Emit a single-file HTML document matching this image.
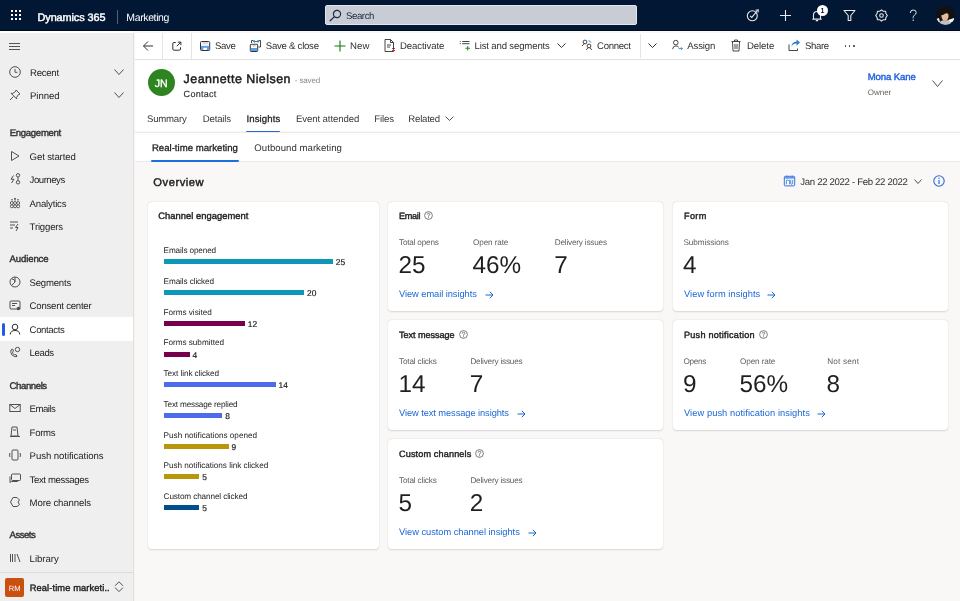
<!DOCTYPE html>
<html><head><meta charset="utf-8"><style>
html,body{margin:0;padding:0;width:960px;height:601px;overflow:hidden;background:#f9f8f7;font-family:"Liberation Sans", sans-serif}
.t{position:absolute;line-height:1;white-space:nowrap;font-family:"Liberation Sans", sans-serif;text-rendering:geometricPrecision}
svg{overflow:visible}
</style></head><body>
<div style="position:absolute;left:0;top:0;width:960px;height:601px;will-change:transform">
<div style="position:absolute;left:0px;top:0px;width:960px;height:31px;background:#011733"></div>
<div style="position:absolute;left:0px;top:30px;width:960px;height:1px;background:#000b1f"></div>
<div style="position:absolute;left:11px;top:10px;width:2px;height:2px;background:#fff"></div>
<div style="position:absolute;left:11px;top:14px;width:2px;height:2px;background:#fff"></div>
<div style="position:absolute;left:11px;top:18px;width:2px;height:2px;background:#fff"></div>
<div style="position:absolute;left:15px;top:10px;width:2px;height:2px;background:#fff"></div>
<div style="position:absolute;left:15px;top:14px;width:2px;height:2px;background:#fff"></div>
<div style="position:absolute;left:15px;top:18px;width:2px;height:2px;background:#fff"></div>
<div style="position:absolute;left:19px;top:10px;width:2px;height:2px;background:#fff"></div>
<div style="position:absolute;left:19px;top:14px;width:2px;height:2px;background:#fff"></div>
<div style="position:absolute;left:19px;top:18px;width:2px;height:2px;background:#fff"></div>
<div class="t" style="left:37.50px;top:13.00px;font-size:10.9px;color:#fff;font-weight:400;letter-spacing:-0.091px;-webkit-text-stroke:0.45px #fff">Dynamics 365</div>
<div style="position:absolute;left:117px;top:10px;width:1px;height:14px;background:#56617a"></div>
<div class="t" style="left:126.30px;top:13.00px;font-size:10.5px;color:#fff;font-weight:400;letter-spacing:-0.375px;">Marketing</div>
<div style="position:absolute;left:325px;top:5px;width:312px;height:20px;background:#c8ccd4;border-radius:2px;box-sizing:border-box;border:1px solid #e4e6ea"></div>
<svg style="position:absolute;left:329px;top:9px;" width="13" height="13" viewBox="0 0 13 13" fill="none"><circle cx="8" cy="5" r="3.6" stroke="#1f2a44" stroke-width="1.2"/><path d="M5.4 7.6 L1.2 11.8" stroke="#1f2a44" stroke-width="1.3" stroke-linecap="round"/></svg>
<div class="t" style="left:346.00px;top:12.00px;font-size:9.6px;color:#1b2741;font-weight:400;letter-spacing:-0.400px;">Search</div>
<svg style="position:absolute;left:746px;top:9px;" width="14" height="13" viewBox="0 0 14 13" fill="none"><circle cx="6.3" cy="6.8" r="5" stroke="#e8eaee" stroke-width="1.1"/><path d="M4 6.8 L5.8 8.4 L11.5 1.5" stroke="#e8eaee" stroke-width="1.1"/><path d="M9.5 1.3 L12.3 0.8 L12 3.5" stroke="#e8eaee" stroke-width="1.1"/></svg>
<svg style="position:absolute;left:779px;top:9px;" width="13" height="13" viewBox="0 0 13 13" fill="none"><path d="M6.5 1 V12 M1 6.5 H12" stroke="#e8eaee" stroke-width="1.1"/></svg>
<svg style="position:absolute;left:811px;top:9px;" width="12" height="13" viewBox="0 0 12 13" fill="none"><path d="M2.5 10 V6 A3.5 3.5 0 0 1 9.5 6 V10 Z M1.2 10.2 H10.8 M4.8 11.6 H7.2" stroke="#e8eaee" stroke-width="1.1"/></svg>
<div style="position:absolute;left:817px;top:4.5px;width:11px;height:11px;border-radius:50%;background:#fff;color:#011733;font:bold 7px/11px 'Liberation Sans',sans-serif;text-align:center">1</div>
<svg style="position:absolute;left:843px;top:9px;" width="13" height="13" viewBox="0 0 13 13" fill="none"><path d="M1 1.5 H12 L7.8 6.5 V11.5 H5.2 V6.5 Z" stroke="#e8eaee" stroke-width="1.1" stroke-linejoin="round"/></svg>
<svg style="position:absolute;left:875px;top:9px;" width="13" height="13" viewBox="0 0 13 13" fill="none"><path d="M6.5 0.8 L8.3 2.3 L10.6 2.2 L10.9 4.5 L12.3 6.5 L10.9 8.5 L10.6 10.8 L8.3 10.7 L6.5 12.2 L4.7 10.7 L2.4 10.8 L2.1 8.5 L0.7 6.5 L2.1 4.5 L2.4 2.2 L4.7 2.3 Z" stroke="#e8eaee" stroke-width="1.1" stroke-linejoin="round"/><circle cx="6.5" cy="6.5" r="1.8" stroke="#e8eaee" stroke-width="1.1"/></svg>
<svg style="position:absolute;left:908px;top:9px;" width="10" height="13" viewBox="0 0 10 13" fill="none"><path d="M2.3 3.6 Q2.3 1 5.2 1 Q8.2 1 8.2 3.5 Q8.2 5.2 6.3 6.3 Q5.2 7 5.2 8.6 V9" stroke="#e8eaee" stroke-width="1" stroke-linecap="round"/><circle cx="5.2" cy="11.3" r="0.7" fill="#e8eaee"/></svg>
<svg style="position:absolute;left:936px;top:6px;" width="19" height="19" viewBox="0 0 19 19" fill="none"><defs><clipPath id="av"><circle cx="9.5" cy="9.5" r="9.5"/></clipPath></defs><g clip-path="url(#av)"><rect width="19" height="19" fill="#141010"/><path d="M3 19 Q3 14 9.5 14 Q16 14 16 19Z" fill="#b9c1cc"/><path d="M12 14 L18 12 L19 16 L14 16Z" fill="#f2f2f2"/><path d="M0 13 L3 12 L4 16 L0 17Z" fill="#e8e8e8"/><ellipse cx="9" cy="10" rx="3.6" ry="4.6" fill="#e6bb9c"/><path d="M5 9 Q6 3 11 4 Q13 5 13 8 Q10 6 7 9 Z" fill="#141010"/><rect x="8.2" y="13.5" width="2.2" height="2" fill="#d9a888"/></g></svg>
<div style="position:absolute;left:0px;top:31px;width:133px;height:2px;background:#ffffff"></div>
<div style="position:absolute;left:0px;top:33px;width:133px;height:568px;background:#efefef"></div>
<div style="position:absolute;left:133px;top:33px;width:1px;height:568px;background:#e0e0e0"></div>
<div style="position:absolute;left:134px;top:33px;width:1px;height:568px;background:#f4f4f4"></div>
<div style="position:absolute;left:9px;top:43px;width:11px;height:1px;background:#555"></div>
<div style="position:absolute;left:9px;top:46px;width:11px;height:1px;background:#555"></div>
<div style="position:absolute;left:9px;top:49px;width:11px;height:1px;background:#555"></div>
<div class="t" style="left:30.00px;top:69.00px;font-size:9.6px;color:#252423;font-weight:400;letter-spacing:-0.260px;">Recent</div>
<svg style="position:absolute;left:9px;top:66px;" width="12" height="12" viewBox="0 0 12 12" fill="none"><circle cx="6" cy="6" r="5.3" stroke="#505050" stroke-width="1"/><path d="M6 3 V6.3 H8.4" stroke="#505050" stroke-width="1"/></svg>
<svg style="position:absolute;left:114px;top:69px;" width="10" height="6" viewBox="0 0 10 6" fill="none"><path d="M0.5 0.5 L5.0 5.5 L9.5 0.5" stroke="#505050" stroke-width="1"/></svg>
<div class="t" style="left:30.00px;top:92.00px;font-size:9.6px;color:#252423;font-weight:400;letter-spacing:-0.060px;">Pinned</div>
<svg style="position:absolute;left:9px;top:89px;" width="12" height="12" viewBox="0 0 12 12" fill="none"><path d="M7 1 L11 5 L9.5 5.5 L7.5 8.5 L7.8 10 L2 4.2 L3.5 4.5 L6.5 2.5 Z M4.5 7.5 L1 11" stroke="#505050" stroke-width="1" stroke-linejoin="round"/></svg>
<svg style="position:absolute;left:114px;top:92px;" width="10" height="6" viewBox="0 0 10 6" fill="none"><path d="M0.5 0.5 L5.0 5.5 L9.5 0.5" stroke="#505050" stroke-width="1"/></svg>
<div class="t" style="left:9.80px;top:129.00px;font-size:9.6px;color:#323130;font-weight:400;letter-spacing:-0.333px;-webkit-text-stroke:0.4px #323130">Engagement</div>
<div class="t" style="left:9.60px;top:255.00px;font-size:9.6px;color:#323130;font-weight:400;letter-spacing:-0.143px;-webkit-text-stroke:0.4px #323130">Audience</div>
<div class="t" style="left:9.60px;top:382.00px;font-size:9.6px;color:#323130;font-weight:400;letter-spacing:-0.429px;-webkit-text-stroke:0.4px #323130">Channels</div>
<div class="t" style="left:9.60px;top:531.00px;font-size:9.6px;color:#323130;font-weight:400;letter-spacing:-0.520px;-webkit-text-stroke:0.4px #323130">Assets</div>
<div style="position:absolute;left:0px;top:317px;width:133px;height:24px;background:#fff"></div>
<div style="position:absolute;left:2px;top:323px;width:3px;height:13px;background:#1f5ce6;border-radius:2px"></div>
<div class="t" style="left:29.60px;top:153.00px;font-size:9.6px;color:#252423;font-weight:400;letter-spacing:-0.130px;">Get started</div>
<svg style="position:absolute;left:9px;top:150px;" width="12" height="12" viewBox="0 0 12 12" fill="none"><path d="M2.5 1.5 L10 6 L2.5 10.5 Z" stroke="#505050" stroke-width="1" stroke-linejoin="round"/></svg>
<div class="t" style="left:29.60px;top:176.00px;font-size:9.6px;color:#252423;font-weight:400;letter-spacing:-0.471px;">Journeys</div>
<svg style="position:absolute;left:9px;top:173.3px;" width="12" height="12" viewBox="0 0 12 12" fill="none"><circle cx="9" cy="2.3" r="1.7" stroke="#505050"/><circle cx="9" cy="9.3" r="1.7" stroke="#505050"/><path d="M9 4 V7.6 M4.5 2.5 L2 6.2 H5 L2.5 10" stroke="#505050" stroke-linejoin="round"/></svg>
<div class="t" style="left:29.60px;top:200.00px;font-size:9.6px;color:#252423;font-weight:400;letter-spacing:-0.188px;">Analytics</div>
<svg style="position:absolute;left:9px;top:196.7px;" width="12" height="12" viewBox="0 0 12 12" fill="none"><circle cx="2.8" cy="9.3" r="1.5" stroke="#505050" stroke-width="0.9"/><circle cx="6" cy="9.3" r="1.5" stroke="#505050" stroke-width="0.9"/><circle cx="9.2" cy="9.3" r="1.5" stroke="#505050" stroke-width="0.9"/><circle cx="2.8" cy="6" r="1.5" stroke="#505050" stroke-width="0.9"/><circle cx="6" cy="6" r="1.5" stroke="#505050" stroke-width="0.9"/><circle cx="9.2" cy="6" r="1.5" stroke="#505050" stroke-width="0.9"/><path d="M2 2.8 H4 M5 2.8 H7 M5 1.5 H7 M8 2.8 H10" stroke="#505050" stroke-width="0.9"/></svg>
<div class="t" style="left:29.60px;top:223.00px;font-size:9.6px;color:#252423;font-weight:400;letter-spacing:-0.186px;">Triggers</div>
<svg style="position:absolute;left:9px;top:220px;" width="12" height="12" viewBox="0 0 12 12" fill="none"><path d="M1 2 H9 M1 5 H6 M1 8 H4 M9 4 L6.5 7.5 H9 L7 11" stroke="#505050" stroke-linejoin="round"/></svg>
<div class="t" style="left:29.60px;top:279.00px;font-size:9.6px;color:#252423;font-weight:400;letter-spacing:-0.229px;">Segments</div>
<svg style="position:absolute;left:9px;top:276px;" width="12" height="12" viewBox="0 0 12 12" fill="none"><circle cx="6" cy="6" r="5" stroke="#505050"/><path d="M6 1 V6 L2.5 9.5 M6 6 A3 3 0 0 0 3 3" stroke="#505050"/></svg>
<div class="t" style="left:29.60px;top:302.00px;font-size:9.6px;color:#252423;font-weight:400;letter-spacing:-0.231px;">Consent center</div>
<svg style="position:absolute;left:9px;top:299.4px;" width="12" height="12" viewBox="0 0 12 12" fill="none"><rect x="1" y="2" width="10" height="8" rx="1" stroke="#505050"/><path d="M3 4.5 H8 M3 6.5 H6" stroke="#505050"/><circle cx="9.5" cy="9.5" r="1.8" fill="#505050"/></svg>
<div class="t" style="left:29.60px;top:326.00px;font-size:9.6px;color:#252423;font-weight:400;letter-spacing:-0.371px;">Contacts</div>
<svg style="position:absolute;left:9px;top:322.6px;" width="12" height="12" viewBox="0 0 12 12" fill="none"><circle cx="6" cy="4" r="2.8" stroke="#303030"/><path d="M1.2 11.5 Q1.5 7.5 6 7.5 Q10.5 7.5 10.8 11.5" stroke="#303030"/></svg>
<div class="t" style="left:29.60px;top:349.00px;font-size:9.6px;color:#252423;font-weight:400;letter-spacing:-0.400px;">Leads</div>
<svg style="position:absolute;left:9px;top:346px;" width="12" height="12" viewBox="0 0 12 12" fill="none"><circle cx="8.5" cy="3.5" r="2.2" stroke="#505050"/><path d="M2 4 Q1 6 3 9 Q6 11.5 8 10.5 L7 8.5 L5.5 9 Q3.5 7.5 3.5 6 L4.5 5 L3.5 3 Z" stroke="#505050" stroke-linejoin="round"/></svg>
<div class="t" style="left:29.60px;top:405.00px;font-size:9.6px;color:#252423;font-weight:400;letter-spacing:-0.520px;">Emails</div>
<svg style="position:absolute;left:9px;top:402.4px;" width="12" height="12" viewBox="0 0 12 12" fill="none"><rect x="0.8" y="2.5" width="10.4" height="7" stroke="#505050"/><path d="M0.8 2.5 L6 6.5 L11.2 2.5" stroke="#505050"/></svg>
<div class="t" style="left:29.60px;top:429.00px;font-size:9.6px;color:#252423;font-weight:400;letter-spacing:-0.300px;">Forms</div>
<svg style="position:absolute;left:9px;top:425.8px;" width="12" height="12" viewBox="0 0 12 12" fill="none"><path d="M3 1 H8 L9 10 H2 Z M1 10.5 H11" stroke="#505050" stroke-linejoin="round"/><path d="M4 4 H7" stroke="#505050"/></svg>
<div class="t" style="left:29.60px;top:452.00px;font-size:9.6px;color:#252423;font-weight:400;letter-spacing:-0.071px;">Push notifications</div>
<svg style="position:absolute;left:9px;top:449.4px;" width="12" height="12" viewBox="0 0 12 12" fill="none"><rect x="3" y="1" width="6" height="10" rx="1" stroke="#505050"/><path d="M1 4 Q0 6 1 8 M11 4 Q12 6 11 8" stroke="#505050"/></svg>
<div class="t" style="left:29.60px;top:476.00px;font-size:9.6px;color:#252423;font-weight:400;letter-spacing:-0.383px;">Text messages</div>
<svg style="position:absolute;left:9px;top:472.6px;" width="12" height="12" viewBox="0 0 12 12" fill="none"><rect x="2.5" y="1" width="9" height="6.5" rx="1" stroke="#505050"/><path d="M1 3.5 V9.5 L2.5 8.5 H8.5 V7.5" stroke="#505050" stroke-linejoin="round"/></svg>
<div class="t" style="left:29.60px;top:499.00px;font-size:9.6px;color:#252423;font-weight:400;letter-spacing:-0.133px;">More channels</div>
<svg style="position:absolute;left:9px;top:496px;" width="12" height="12" viewBox="0 0 12 12" fill="none"><path d="M4 1.5 L8 1.5 L10.5 4 L9 6 L10.5 8.5 L8 10.5 L4 10.5 L1.5 6 Z" stroke="#505050" stroke-linejoin="round"/></svg>
<div class="t" style="left:29.60px;top:555.00px;font-size:9.6px;color:#252423;font-weight:400;letter-spacing:-0.033px;">Library</div>
<svg style="position:absolute;left:9px;top:552px;" width="12" height="12" viewBox="0 0 12 12" fill="none"><path d="M1.5 2 V10 M3.5 2 V10 M6 2 V10 M8 2 L11 10" stroke="#505050"/></svg>
<div style="position:absolute;left:0px;top:572px;width:133px;height:1px;background:#dcdcdc"></div>
<div style="position:absolute;left:5px;top:578px;width:19px;height:19px;background:#ca5010;border-radius:2px"></div>
<div class="t" style="left:8.80px;top:585.00px;font-size:7.6px;color:#fff;font-weight:400;">RM</div>
<div class="t" style="left:29.70px;top:584.00px;font-size:9.3px;color:#201f1e;font-weight:400;letter-spacing:0.111px;-webkit-text-stroke:0.4px #201f1e">Real-time marketi..</div>
<svg style="position:absolute;left:114px;top:581px;" width="10" height="12" viewBox="0 0 10 12" fill="none"><path d="M1 4.8 L5 0.8 L9 4.8 M1 6.6 L5 10.6 L9 6.6" stroke="#505050" stroke-width="1"/></svg>
<div style="position:absolute;left:135px;top:33px;width:825px;height:26px;background:#fff"></div>
<div style="position:absolute;left:135px;top:59px;width:825px;height:1px;background:#e3e1df"></div>
<svg style="position:absolute;left:142px;top:40px;" width="12" height="12" viewBox="0 0 12 12" fill="none"><path d="M11 6 H1.5 M6 1.5 L1.5 6 L6 10.5" stroke="#323130" stroke-width="1"/></svg>
<div style="position:absolute;left:162px;top:33px;width:1px;height:26px;background:#e6e4e2"></div>
<svg style="position:absolute;left:172px;top:41px;" width="10" height="10" viewBox="0 0 10 10" fill="none"><path d="M3.8 1.5 H2 Q0.8 1.5 0.8 2.7 V8 Q0.8 9.2 2 9.2 H7.3 Q8.5 9.2 8.5 8 V6.3" stroke="#323130" stroke-width="1"/><path d="M4.8 5.2 L8.8 1.2 M5.8 1.1 H8.9 V4.2" stroke="#323130" stroke-width="1"/></svg>
<div style="position:absolute;left:191px;top:33px;width:1px;height:26px;background:#e6e4e2"></div>
<svg style="position:absolute;left:200px;top:40.5px;" width="10" height="10" viewBox="0 0 10 10" fill="none"><rect x="0.5" y="0.5" width="9.2" height="9" rx="1" fill="#fff" stroke="#323130" stroke-width="1"/><rect x="1" y="4.8" width="8.2" height="4.2" fill="#5ca0e8"/><rect x="2.3" y="1" width="5.6" height="2.3" fill="#d8d8d8"/><rect x="3.3" y="6.8" width="3.6" height="2.2" fill="#fff"/></svg>
<div class="t" style="left:215.00px;top:42.00px;font-size:9.6px;color:#323130;font-weight:400;letter-spacing:-0.333px;">Save</div>
<svg style="position:absolute;left:249px;top:39px;" width="13" height="13" viewBox="0 0 13 13" fill="none"><rect x="1.3" y="5.3" width="7.4" height="7.2" rx="0.8" fill="#fff" stroke="#323130" stroke-width="1"/><rect x="1.8" y="9" width="6.4" height="3" fill="#5ca0e8"/><rect x="3.3" y="5.8" width="3.4" height="1.8" fill="#d0d0d0"/><path d="M2.5 4 V1.5 H4.5 M9.5 1.5 H11.5 V8 H9.5" stroke="#323130" stroke-width="0.9"/><path d="M4.5 2.5 H9.8 M8.6 1.3 L9.8 2.5 L8.6 3.7 M5.7 1.3 L4.5 2.5 L5.7 3.7" stroke="#1b6ad0" stroke-width="0.9"/></svg>
<div class="t" style="left:265.75px;top:42.00px;font-size:9.6px;color:#323130;font-weight:400;letter-spacing:-0.250px;">Save &amp; close</div>
<svg style="position:absolute;left:334px;top:40px;" width="12" height="12" viewBox="0 0 12 12" fill="none"><path d="M6 0.5 V11.5 M0.5 6 H11.5" stroke="#107c10" stroke-width="1.1"/></svg>
<div class="t" style="left:350.00px;top:42.00px;font-size:9.6px;color:#323130;font-weight:400;letter-spacing:0.125px;">New</div>
<svg style="position:absolute;left:384px;top:39px;" width="12" height="13" viewBox="0 0 12 13" fill="none"><path d="M1 0.5 H6.5 L9.5 3.5 V12.5 H1 Z M6.5 0.5 V3.5 H9.5 M3 6 H7 M3 8 H6" stroke="#323130" stroke-width="0.9" stroke-linejoin="round"/><path d="M8 9 L11 12 M11 9 L8 12" stroke="#d13438" stroke-width="1"/></svg>
<div class="t" style="left:400.00px;top:42.00px;font-size:9.6px;color:#323130;font-weight:400;letter-spacing:-0.111px;">Deactivate</div>
<svg style="position:absolute;left:459px;top:39px;" width="12" height="12" viewBox="0 0 12 12" fill="none"><circle cx="1.3" cy="2.5" r="0.6" fill="#505050"/><circle cx="1.3" cy="4.7" r="0.6" fill="#505050"/><path d="M3.2 2.5 H10.5 M3.2 4.7 H10.5" stroke="#323130" stroke-width="0.9"/><path d="M8.7 7 V11.6 M6.4 9.3 H11" stroke="#2e8b2e" stroke-width="1.1"/></svg>
<div class="t" style="left:474.50px;top:42.00px;font-size:9.6px;color:#323130;font-weight:400;letter-spacing:-0.156px;">List and segments</div>
<svg style="position:absolute;left:557px;top:43px;" width="9" height="5" viewBox="0 0 9 5" fill="none"><path d="M0.5 0.5 L4.5 4.5 L8.5 0.5" stroke="#323130" stroke-width="1"/></svg>
<svg style="position:absolute;left:581px;top:39px;" width="13" height="13" viewBox="0 0 13 13" fill="none"><circle cx="4" cy="3" r="1.9" stroke="#323130" stroke-width="0.9"/><path d="M3 4.8 L1.2 6.8" stroke="#323130" stroke-width="0.9" stroke-linecap="round"/><circle cx="8" cy="7" r="1.9" stroke="#323130" stroke-width="0.9"/><path d="M7 8.8 L5.4 10.6 M9 8.8 L10.6 10.6" stroke="#323130" stroke-width="0.9" stroke-linecap="round"/><path d="M7.6 1.6 Q9.3 1.9 9.9 3.6" stroke="#2b88d8" stroke-width="1"/></svg>
<div class="t" style="left:597.00px;top:42.00px;font-size:9.6px;color:#323130;font-weight:400;letter-spacing:-0.292px;">Connect</div>
<div style="position:absolute;left:640px;top:34px;width:1px;height:24px;background:#e6e4e2"></div>
<svg style="position:absolute;left:648px;top:43px;" width="9" height="5" viewBox="0 0 9 5" fill="none"><path d="M0.5 0.5 L4.5 4.5 L8.5 0.5" stroke="#323130" stroke-width="1"/></svg>
<svg style="position:absolute;left:672px;top:39px;" width="12" height="13" viewBox="0 0 12 13" fill="none"><circle cx="3.8" cy="3.6" r="2.3" stroke="#323130" stroke-width="0.9"/><path d="M0.7 9.8 Q0.9 6.9 3.8 6.9 Q5.6 6.9 6.5 7.9" stroke="#323130" stroke-width="0.9" stroke-linecap="round"/><path d="M6.6 9.6 H10.4 M9 8.2 L10.4 9.6 L9 11" stroke="#2b88d8" stroke-width="0.9"/></svg>
<div class="t" style="left:687.30px;top:42.00px;font-size:9.6px;color:#323130;font-weight:400;letter-spacing:-0.160px;">Assign</div>
<svg style="position:absolute;left:731px;top:39px;" width="10" height="13" viewBox="0 0 10 13" fill="none"><path d="M0.5 2.5 H9.5 M3.5 2.5 V1 H6.5 V2.5 M1.5 2.5 L2 12 H8 L8.5 2.5 M4 5 V10 M6 5 V10" stroke="#323130" stroke-width="0.9"/></svg>
<div class="t" style="left:747.00px;top:42.00px;font-size:9.6px;color:#323130;font-weight:400;letter-spacing:-0.100px;">Delete</div>
<svg style="position:absolute;left:788px;top:39px;" width="13" height="13" viewBox="0 0 13 13" fill="none"><path d="M1 5.5 V11.5 H9.5 V9.5" stroke="#323130" stroke-width="0.9"/><path d="M3.2 9.2 Q3.6 4.8 8.6 4.6 V6.8 L12 3.6 L8.6 0.6 V2.6 Q3.4 3 3.2 9.2 Z" fill="#2b7cd3"/></svg>
<div class="t" style="left:805.00px;top:42.00px;font-size:9.6px;color:#323130;font-weight:400;letter-spacing:-0.375px;">Share</div>
<div style="position:absolute;left:844.5px;top:45px;width:1.8px;height:1.8px;background:#323130;border-radius:50%"></div>
<div style="position:absolute;left:848.7px;top:45px;width:1.8px;height:1.8px;background:#323130;border-radius:50%"></div>
<div style="position:absolute;left:852.9px;top:45px;width:1.8px;height:1.8px;background:#323130;border-radius:50%"></div>
<div style="position:absolute;left:135px;top:60px;width:825px;height:71px;background:#fff"></div>
<div style="position:absolute;left:147.5px;top:69px;width:27px;height:27px;border-radius:50%;background:#2e8420"></div>
<div class="t" style="left:154.80px;top:79.00px;font-size:10.6px;color:#fff;font-weight:400;-webkit-text-stroke:0.35px #fff">JN</div>
<div class="t" style="left:183.60px;top:73.00px;font-size:12.4px;color:#201f1e;font-weight:400;letter-spacing:0.475px;-webkit-text-stroke:0.5px #201f1e">Jeannette Nielsen</div>
<div class="t" style="left:294.80px;top:77.00px;font-size:8.0px;color:#8a8886;font-weight:400;letter-spacing:-0.15px">- saved</div>
<div class="t" style="left:183.60px;top:90.00px;font-size:9.0px;color:#323130;font-weight:400;letter-spacing:0.283px;-webkit-text-stroke:0.15px #323130">Contact</div>
<div class="t" style="left:867.70px;top:73.00px;font-size:9.6px;color:#1f63e0;font-weight:400;letter-spacing:-0.125px;-webkit-text-stroke:0.4px #1f63e0">Mona Kane</div>
<div class="t" style="left:867.70px;top:89.00px;font-size:8.0px;color:#605e5c;font-weight:400;letter-spacing:0.000px;">Owner</div>
<svg style="position:absolute;left:932px;top:80px;" width="11" height="7" viewBox="0 0 11 7" fill="none"><path d="M0.5 0.5 L5.5 6.5 L10.5 0.5" stroke="#505050" stroke-width="1"/></svg>
<div class="t" style="left:147.00px;top:115.00px;font-size:9.6px;color:#3b3a39;font-weight:400;letter-spacing:-0.217px;">Summary</div>
<div class="t" style="left:202.75px;top:115.00px;font-size:9.6px;color:#3b3a39;font-weight:400;letter-spacing:-0.167px;">Details</div>
<div class="t" style="left:246.50px;top:115.00px;font-size:9.6px;color:#201f1e;font-weight:400;letter-spacing:0.100px;-webkit-text-stroke:0.3px #201f1e">Insights</div>
<div class="t" style="left:296.00px;top:115.00px;font-size:9.6px;color:#3b3a39;font-weight:400;letter-spacing:-0.100px;">Event attended</div>
<div class="t" style="left:374.30px;top:115.00px;font-size:9.6px;color:#3b3a39;font-weight:400;letter-spacing:-0.150px;">Files</div>
<div class="t" style="left:408.30px;top:115.00px;font-size:9.6px;color:#3b3a39;font-weight:400;letter-spacing:-0.217px;">Related</div>
<svg style="position:absolute;left:445px;top:116px;" width="9" height="5" viewBox="0 0 9 5" fill="none"><path d="M0.5 0.5 L4.5 4.5 L8.5 0.5" stroke="#505050" stroke-width="1"/></svg>
<div style="position:absolute;left:246px;top:131px;width:34px;height:2px;background:#2367e0;border-radius:1px"></div>
<div style="position:absolute;left:135px;top:132px;width:825px;height:1px;background:#edebe9"></div>
<div style="position:absolute;left:135px;top:133px;width:825px;height:29px;background:#fff"></div>
<div class="t" style="left:151.90px;top:144.00px;font-size:9.6px;color:#201f1e;font-weight:400;letter-spacing:0.011px;-webkit-text-stroke:0.3px #201f1e">Real-time marketing</div>
<div class="t" style="left:254.30px;top:144.00px;font-size:9.6px;color:#323130;font-weight:400;letter-spacing:0.041px;">Outbound marketing</div>
<div style="position:absolute;left:135px;top:161px;width:825px;height:1px;background:#ebe9e7"></div>
<div style="position:absolute;left:151px;top:160px;width:88px;height:2px;background:#1c6fdc;border-radius:1px"></div>
<div style="position:absolute;left:135px;top:162px;width:825px;height:439px;background:#f9f8f7"></div>
<div class="t" style="left:153.30px;top:178.00px;font-size:11.2px;color:#201f1e;font-weight:400;letter-spacing:0.529px;-webkit-text-stroke:0.45px #201f1e">Overview</div>
<svg style="position:absolute;left:783px;top:175px;" width="13" height="12" viewBox="0 0 13 12" fill="none"><rect x="1.3" y="1.3" width="10.4" height="9.6" rx="1" stroke="#2f74e0" stroke-width="1"/><path d="M1.5 2.9 H11.5" stroke="#2f74e0" stroke-width="1.2"/><circle cx="3.8" cy="1.2" r="0.6" fill="#2f74e0"/><circle cx="9.2" cy="1.2" r="0.6" fill="#2f74e0"/><path d="M3.4 9.3 V5.9 Q3.4 4.9 4.5 4.9 Q5.5 4.9 5.5 5.9 M6.6 4.9 V9.3 M7.7 4.9 V8.2 Q7.7 9.3 8.7 9.3 Q9.7 9.3 9.7 8.2 V4.9" stroke="#2f74e0" stroke-width="0.8"/></svg>
<div class="t" style="left:800.30px;top:178.00px;font-size:9.6px;color:#323130;font-weight:400;letter-spacing:-0.321px;">Jan 22 2022 - Feb 22 2022</div>
<svg style="position:absolute;left:914px;top:179px;" width="8" height="5" viewBox="0 0 8 5" fill="none"><path d="M0.5 0.5 L4.0 4.5 L7.5 0.5" stroke="#505050" stroke-width="1"/></svg>
<svg style="position:absolute;left:933px;top:175px;" width="12" height="12" viewBox="0 0 12 12" fill="none"><circle cx="6" cy="6" r="5.2" stroke="#2b6fd6" stroke-width="1.1"/><path d="M6 5 V9" stroke="#2b6fd6" stroke-width="1.2"/><circle cx="6" cy="3.3" r="0.7" fill="#2b6fd6"/></svg>
<div style="position:absolute;left:148px;top:202px;width:231px;height:347px;background:#fff;border-radius:4px;box-shadow:0 0.8px 1.8px rgba(0,0,0,0.13),0 0 1px rgba(0,0,0,0.11)"></div>
<div style="position:absolute;left:388px;top:202px;width:275px;height:109px;background:#fff;border-radius:4px;box-shadow:0 0.8px 1.8px rgba(0,0,0,0.13),0 0 1px rgba(0,0,0,0.11)"></div>
<div style="position:absolute;left:673px;top:202px;width:275px;height:109px;background:#fff;border-radius:4px;box-shadow:0 0.8px 1.8px rgba(0,0,0,0.13),0 0 1px rgba(0,0,0,0.11)"></div>
<div style="position:absolute;left:388px;top:320px;width:275px;height:110px;background:#fff;border-radius:4px;box-shadow:0 0.8px 1.8px rgba(0,0,0,0.13),0 0 1px rgba(0,0,0,0.11)"></div>
<div style="position:absolute;left:673px;top:320px;width:275px;height:110px;background:#fff;border-radius:4px;box-shadow:0 0.8px 1.8px rgba(0,0,0,0.13),0 0 1px rgba(0,0,0,0.11)"></div>
<div style="position:absolute;left:388px;top:439px;width:275px;height:110px;background:#fff;border-radius:4px;box-shadow:0 0.8px 1.8px rgba(0,0,0,0.13),0 0 1px rgba(0,0,0,0.11)"></div>
<div class="t" style="left:158.30px;top:211.00px;font-size:9.4px;color:#201f1e;font-weight:400;letter-spacing:0.024px;-webkit-text-stroke:0.4px #201f1e">Channel engagement</div>
<div class="t" style="left:163.60px;top:247.00px;font-size:8.2px;color:#252423;font-weight:400;letter-spacing:-0.133px;">Emails opened</div>
<div style="position:absolute;left:163.6px;top:259.4px;width:169.4px;height:5px;background:#0e97b9"></div>
<div class="t" style="left:335.80px;top:258.00px;font-size:8.4px;color:#201f1e;font-weight:400;-webkit-text-stroke:0.2px #201f1e">25</div>
<div class="t" style="left:163.60px;top:278.00px;font-size:8.2px;color:#252423;font-weight:400;letter-spacing:-0.108px;">Emails clicked</div>
<div style="position:absolute;left:163.6px;top:290.1px;width:140.7px;height:5px;background:#0e97b9"></div>
<div class="t" style="left:307.05px;top:289.00px;font-size:8.4px;color:#201f1e;font-weight:400;-webkit-text-stroke:0.2px #201f1e">20</div>
<div class="t" style="left:163.60px;top:309.00px;font-size:8.2px;color:#252423;font-weight:400;letter-spacing:-0.042px;">Forms visited</div>
<div style="position:absolute;left:163.6px;top:320.8px;width:81.4px;height:5px;background:#77004d"></div>
<div class="t" style="left:247.80px;top:320.00px;font-size:8.4px;color:#201f1e;font-weight:400;-webkit-text-stroke:0.2px #201f1e">12</div>
<div class="t" style="left:163.60px;top:339.00px;font-size:8.2px;color:#252423;font-weight:400;letter-spacing:-0.043px;">Forms submitted</div>
<div style="position:absolute;left:163.6px;top:351.6px;width:26.1px;height:5px;background:#77004d"></div>
<div class="t" style="left:192.50px;top:351.00px;font-size:8.4px;color:#201f1e;font-weight:400;-webkit-text-stroke:0.2px #201f1e">4</div>
<div class="t" style="left:163.60px;top:370.00px;font-size:8.2px;color:#252423;font-weight:400;letter-spacing:-0.087px;">Text link clicked</div>
<div style="position:absolute;left:163.6px;top:382.3px;width:112.1px;height:5px;background:#4f6bed"></div>
<div class="t" style="left:278.50px;top:381.00px;font-size:8.4px;color:#201f1e;font-weight:400;-webkit-text-stroke:0.2px #201f1e">14</div>
<div class="t" style="left:163.60px;top:401.00px;font-size:8.2px;color:#252423;font-weight:400;letter-spacing:-0.179px;">Text message replied</div>
<div style="position:absolute;left:163.6px;top:413.0px;width:58.8px;height:5px;background:#4f6bed"></div>
<div class="t" style="left:225.20px;top:412.00px;font-size:8.4px;color:#201f1e;font-weight:400;-webkit-text-stroke:0.2px #201f1e">8</div>
<div class="t" style="left:163.60px;top:432.00px;font-size:8.2px;color:#252423;font-weight:400;letter-spacing:-0.012px;">Push notifications opened</div>
<div style="position:absolute;left:163.6px;top:443.7px;width:65.2px;height:5px;background:#b8960c"></div>
<div class="t" style="left:231.60px;top:443.00px;font-size:8.4px;color:#201f1e;font-weight:400;-webkit-text-stroke:0.2px #201f1e">9</div>
<div class="t" style="left:163.60px;top:462.00px;font-size:8.2px;color:#252423;font-weight:400;letter-spacing:-0.047px;">Push notifications link clicked</div>
<div style="position:absolute;left:163.6px;top:474.4px;width:35.9px;height:5px;background:#b8960c"></div>
<div class="t" style="left:202.30px;top:473.00px;font-size:8.4px;color:#201f1e;font-weight:400;-webkit-text-stroke:0.2px #201f1e">5</div>
<div class="t" style="left:163.60px;top:493.00px;font-size:8.2px;color:#252423;font-weight:400;letter-spacing:-0.124px;">Custom channel clicked</div>
<div style="position:absolute;left:163.6px;top:505.2px;width:35.9px;height:5px;background:#004e8c"></div>
<div class="t" style="left:202.30px;top:504.00px;font-size:8.4px;color:#201f1e;font-weight:400;-webkit-text-stroke:0.2px #201f1e">5</div>
<div class="t" style="left:399.00px;top:212.00px;font-size:9.1px;color:#201f1e;font-weight:400;letter-spacing:-0.300px;-webkit-text-stroke:0.4px #201f1e">Email</div>
<svg style="position:absolute;left:424.2px;top:211.2px;" width="9" height="9" viewBox="0 0 9 9" fill="none"><circle cx="4.5" cy="4.5" r="3.9" stroke="#605e5c" stroke-width="0.8"/><path d="M3.2 3.6 Q3.2 2.3 4.5 2.3 Q5.8 2.3 5.8 3.5 Q5.8 4.3 4.5 4.8 V5.6" stroke="#605e5c" stroke-width="0.8" fill="none"/><circle cx="4.5" cy="6.8" r="0.5" fill="#605e5c"/></svg>
<div class="t" style="left:399.00px;top:239.00px;font-size:8.2px;color:#605e5c;font-weight:400;letter-spacing:-0.200px;">Total opens</div>
<div class="t" style="left:398.40px;top:254.00px;font-size:24.3px;color:#201f1e;font-weight:400;">25</div>
<div class="t" style="left:473.00px;top:239.00px;font-size:8.2px;color:#605e5c;font-weight:400;letter-spacing:-0.125px;">Open rate</div>
<div class="t" style="left:472.40px;top:254.00px;font-size:24.3px;color:#201f1e;font-weight:400;">46%</div>
<div class="t" style="left:554.80px;top:239.00px;font-size:8.2px;color:#605e5c;font-weight:400;letter-spacing:-0.200px;">Delivery issues</div>
<div class="t" style="left:554.20px;top:254.00px;font-size:24.3px;color:#201f1e;font-weight:400;">7</div>
<div class="t" style="left:399.00px;top:290.00px;font-size:9.3px;color:#1a66d6;font-weight:400;letter-spacing:-0.056px;">View email insights</div>
<svg style="position:absolute;left:485px;top:290.6px;" width="9" height="8" viewBox="0 0 9 8" fill="none"><path d="M0.5 4 H8 M4.8 0.8 L8 4 L4.8 7.2" stroke="#1a66d6" stroke-width="1"/></svg>
<div class="t" style="left:684.00px;top:212.00px;font-size:9.1px;color:#201f1e;font-weight:400;letter-spacing:0.333px;-webkit-text-stroke:0.4px #201f1e">Form</div>
<div class="t" style="left:683.50px;top:239.00px;font-size:8.2px;color:#605e5c;font-weight:400;letter-spacing:-0.100px;">Submissions</div>
<div class="t" style="left:682.90px;top:254.00px;font-size:24.3px;color:#201f1e;font-weight:400;">4</div>
<div class="t" style="left:684.00px;top:290.00px;font-size:9.3px;color:#1a66d6;font-weight:400;letter-spacing:0.059px;">View form insights</div>
<svg style="position:absolute;left:767px;top:290.6px;" width="9" height="8" viewBox="0 0 9 8" fill="none"><path d="M0.5 4 H8 M4.8 0.8 L8 4 L4.8 7.2" stroke="#1a66d6" stroke-width="1"/></svg>
<div class="t" style="left:399.00px;top:331.00px;font-size:9.1px;color:#201f1e;font-weight:400;letter-spacing:-0.045px;-webkit-text-stroke:0.4px #201f1e">Text message</div>
<svg style="position:absolute;left:458.9px;top:330.2px;" width="9" height="9" viewBox="0 0 9 9" fill="none"><circle cx="4.5" cy="4.5" r="3.9" stroke="#605e5c" stroke-width="0.8"/><path d="M3.2 3.6 Q3.2 2.3 4.5 2.3 Q5.8 2.3 5.8 3.5 Q5.8 4.3 4.5 4.8 V5.6" stroke="#605e5c" stroke-width="0.8" fill="none"/><circle cx="4.5" cy="6.8" r="0.5" fill="#605e5c"/></svg>
<div class="t" style="left:399.00px;top:358.00px;font-size:8.2px;color:#605e5c;font-weight:400;letter-spacing:-0.164px;">Total clicks</div>
<div class="t" style="left:398.40px;top:373.00px;font-size:24.3px;color:#201f1e;font-weight:400;">14</div>
<div class="t" style="left:470.40px;top:358.00px;font-size:8.2px;color:#605e5c;font-weight:400;letter-spacing:-0.200px;">Delivery issues</div>
<div class="t" style="left:469.80px;top:373.00px;font-size:24.3px;color:#201f1e;font-weight:400;">7</div>
<div class="t" style="left:399.00px;top:409.00px;font-size:9.3px;color:#1a66d6;font-weight:400;letter-spacing:-0.080px;">View text message insights</div>
<svg style="position:absolute;left:517px;top:409.6px;" width="9" height="8" viewBox="0 0 9 8" fill="none"><path d="M0.5 4 H8 M4.8 0.8 L8 4 L4.8 7.2" stroke="#1a66d6" stroke-width="1"/></svg>
<div class="t" style="left:684.00px;top:331.00px;font-size:9.1px;color:#201f1e;font-weight:400;letter-spacing:0.237px;-webkit-text-stroke:0.4px #201f1e">Push notification</div>
<svg style="position:absolute;left:759.2px;top:330.2px;" width="9" height="9" viewBox="0 0 9 9" fill="none"><circle cx="4.5" cy="4.5" r="3.9" stroke="#605e5c" stroke-width="0.8"/><path d="M3.2 3.6 Q3.2 2.3 4.5 2.3 Q5.8 2.3 5.8 3.5 Q5.8 4.3 4.5 4.8 V5.6" stroke="#605e5c" stroke-width="0.8" fill="none"/><circle cx="4.5" cy="6.8" r="0.5" fill="#605e5c"/></svg>
<div class="t" style="left:683.50px;top:358.00px;font-size:8.2px;color:#605e5c;font-weight:400;letter-spacing:-0.300px;">Opens</div>
<div class="t" style="left:682.90px;top:373.00px;font-size:24.3px;color:#201f1e;font-weight:400;">9</div>
<div class="t" style="left:740.00px;top:358.00px;font-size:8.2px;color:#605e5c;font-weight:400;letter-spacing:-0.125px;">Open rate</div>
<div class="t" style="left:739.40px;top:373.00px;font-size:24.3px;color:#201f1e;font-weight:400;">56%</div>
<div class="t" style="left:827.20px;top:358.00px;font-size:8.2px;color:#605e5c;font-weight:400;letter-spacing:0.200px;">Not sent</div>
<div class="t" style="left:826.60px;top:373.00px;font-size:24.3px;color:#201f1e;font-weight:400;">8</div>
<div class="t" style="left:684.00px;top:409.00px;font-size:9.3px;color:#1a66d6;font-weight:400;letter-spacing:0.067px;">View push notification insights</div>
<svg style="position:absolute;left:817px;top:409.6px;" width="9" height="8" viewBox="0 0 9 8" fill="none"><path d="M0.5 4 H8 M4.8 0.8 L8 4 L4.8 7.2" stroke="#1a66d6" stroke-width="1"/></svg>
<div class="t" style="left:399.00px;top:450.00px;font-size:9.1px;color:#201f1e;font-weight:400;letter-spacing:0.143px;-webkit-text-stroke:0.4px #201f1e">Custom channels</div>
<svg style="position:absolute;left:475.2px;top:449.2px;" width="9" height="9" viewBox="0 0 9 9" fill="none"><circle cx="4.5" cy="4.5" r="3.9" stroke="#605e5c" stroke-width="0.8"/><path d="M3.2 3.6 Q3.2 2.3 4.5 2.3 Q5.8 2.3 5.8 3.5 Q5.8 4.3 4.5 4.8 V5.6" stroke="#605e5c" stroke-width="0.8" fill="none"/><circle cx="4.5" cy="6.8" r="0.5" fill="#605e5c"/></svg>
<div class="t" style="left:399.00px;top:477.00px;font-size:8.2px;color:#605e5c;font-weight:400;letter-spacing:-0.164px;">Total clicks</div>
<div class="t" style="left:398.40px;top:492.00px;font-size:24.3px;color:#201f1e;font-weight:400;">5</div>
<div class="t" style="left:470.40px;top:477.00px;font-size:8.2px;color:#605e5c;font-weight:400;letter-spacing:-0.200px;">Delivery issues</div>
<div class="t" style="left:469.80px;top:492.00px;font-size:24.3px;color:#201f1e;font-weight:400;">2</div>
<div class="t" style="left:399.00px;top:528.00px;font-size:9.3px;color:#1a66d6;font-weight:400;letter-spacing:-0.037px;">View custom channel insights</div>
<svg style="position:absolute;left:527.5px;top:528.6px;" width="9" height="8" viewBox="0 0 9 8" fill="none"><path d="M0.5 4 H8 M4.8 0.8 L8 4 L4.8 7.2" stroke="#1a66d6" stroke-width="1"/></svg>
</div>
</body></html>
